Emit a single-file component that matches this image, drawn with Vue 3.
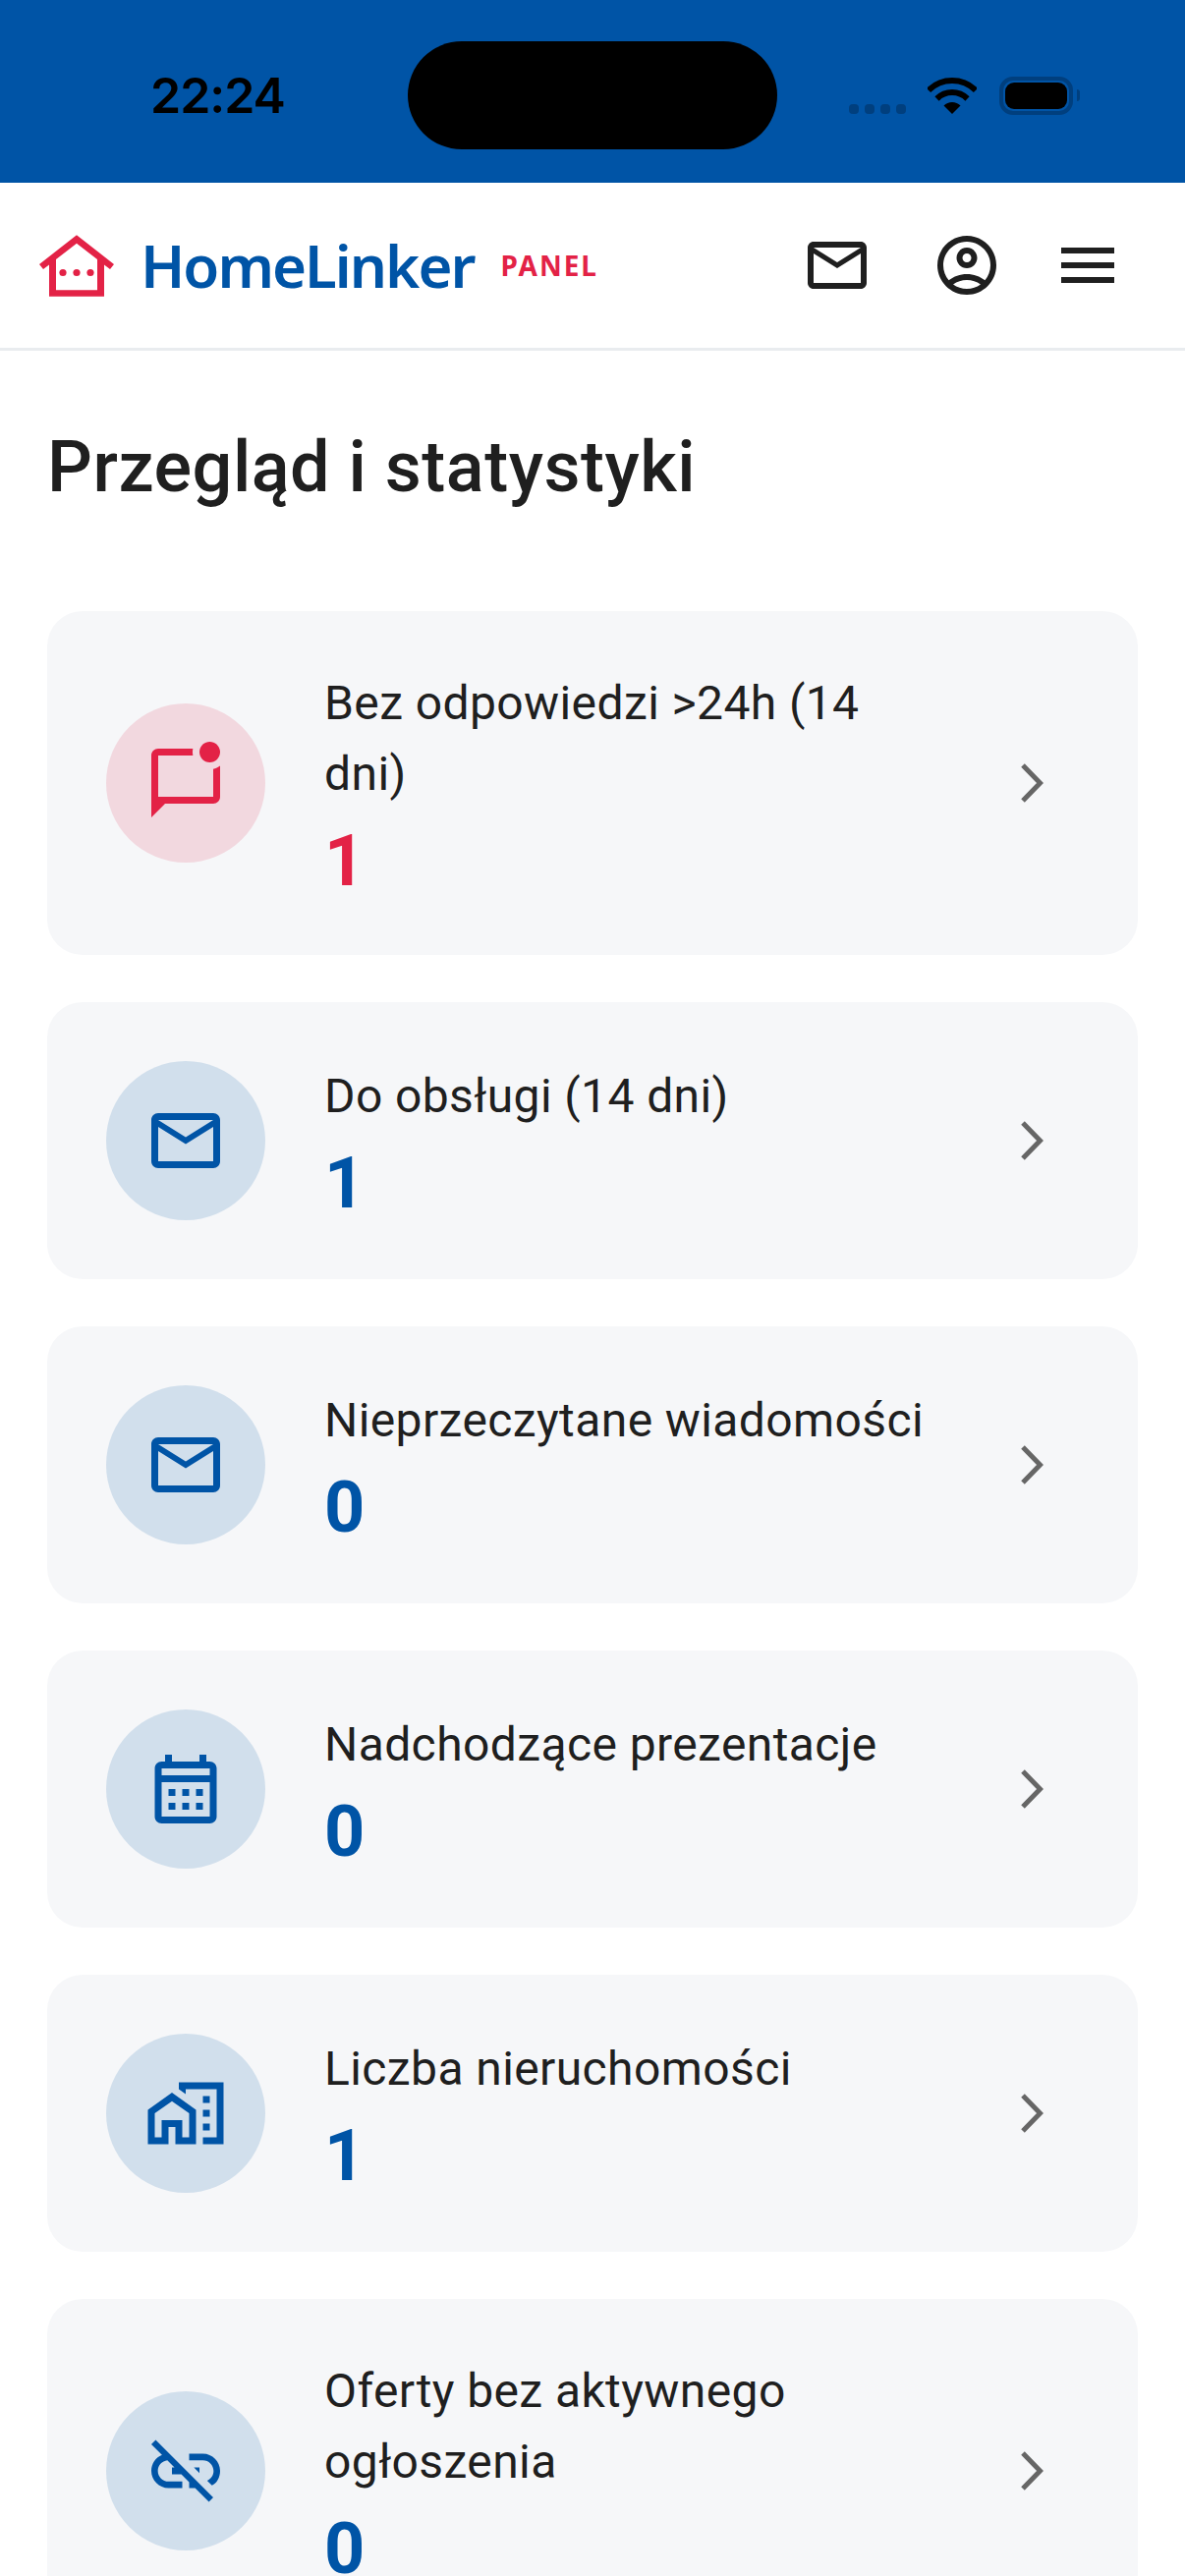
<script setup>
const paths = {
  chat: "M22 6.98V16c0 1.1-.9 2-2 2H6l-4 4V4c0-1.1.9-2 2-2h10.1c-.06.32-.1.66-.1 1s.04.68.1 1H4v12h16V7.9c.74-.15 1.42-.48 2-.92zM16 3c0 1.66 1.34 3 3 3s3-1.34 3-3-1.34-3-3-3-3 1.34-3 3z",
  mail: "M22 6c0-1.1-.9-2-2-2H4c-1.1 0-2 .9-2 2v12c0 1.1.9 2 2 2h16c1.1 0 2-.9 2-2V6zm-2 0l-8 5-8-5h16zm0 12H4V8l8 5 8-5v10z",
  calendar: "M19 4h-1V2h-2v2H8V2H6v2H5c-1.11 0-1.99.9-1.99 2L3 20c0 1.1.89 2 2 2h14c1.1 0 2-.9 2-2V6c0-1.1-.9-2-2-2zm0 16H5V10h14v10zm0-12H5V6h14v2zM9 14H7v-2h2v2zm4 0h-2v-2h2v2zm4 0h-2v-2h2v2zm-8 4H7v-2h2v2zm4 0h-2v-2h2v2zm4 0h-2v-2h2v2z",
  homes: "M1 11v10h6v-5h2v5h6V11L8 6l-7 5zm12 8h-2v-5H5v5H3v-7l5-3.5 5 3.5v7zM17 7h2v2h-2zM17 11h2v2h-2zM17 15h2v2h-2zM10 3v1.97l2 1.43V5h9v14h-4v2h6V3z",
  linkOff: "M14.39 11L16 12.61V11zM17 7h-4v1.9h4c1.71 0 3.1 1.39 3.1 3.1 0 1.27-.77 2.37-1.87 2.84l1.4 1.4C21.05 15.59 22 13.9 22 12c0-2.76-2.24-5-5-5zM2 4.27l3.11 3.11C3.29 8.12 2 9.91 2 12c0 2.76 2.24 5 5 5h4v-1.9H7c-1.71 0-3.1-1.39-3.1-3.1 0-1.59 1.21-2.9 2.76-3.07L8.73 11H8v2h2.73L13 15.27V17h1.73l4.01 4L20 19.74 3.27 3 2 4.27z",
  account: "M12 2C6.48 2 2 6.48 2 12s4.48 10 10 10 10-4.48 10-10S17.52 2 12 2zM7.35 18.5C8.66 17.56 10.26 17 12 17s3.34.56 4.65 1.5C15.34 19.44 13.74 20 12 20s-3.34-.56-4.65-1.5zm10.79-1.38C16.45 15.8 14.32 15 12 15s-4.45.8-6.14 2.12C4.7 15.73 4 13.95 4 12c0-4.42 3.58-8 8-8s8 3.58 8 8c0 1.95-.7 3.73-1.86 5.12zM12 6c-1.93 0-3.5 1.57-3.5 3.5S10.07 13 12 13s3.5-1.57 3.5-3.5S13.93 6 12 6zm0 5c-.83 0-1.5-.67-1.5-1.5S11.17 8 12 8s1.5.67 1.5 1.5S12.83 11 12 11z",
  menu: "M3 18h18v-2H3v2zm0-5h18v-2H3v2zm0-7v2h18V6H3z",
}

const stats = [
  { id: 1, label: "Bez odpowiedzi >24h (14 dni)", value: 1, icon: paths.chat, alert: true },
  { id: 2, label: "Do obsługi (14 dni)", value: 1, icon: paths.mail },
  { id: 3, label: "Nieprzeczytane wiadomości", value: 0, icon: paths.mail },
  { id: 4, label: "Nadchodzące prezentacje", value: 0, icon: paths.calendar },
  { id: 5, label: "Liczba nieruchomości", value: 1, icon: paths.homes },
  { id: 6, label: "Oferty bez aktywnego ogłoszenia", value: 0, icon: paths.linkOff },
]
</script>

<template>
  <main class="screen">
    <div class="status-bar">
      <span class="time">22:24</span>
      <div class="island"></div>
      <div class="signal">
        <i></i><i></i><i></i><i></i>
      </div>
      <svg class="wifi" width="50" height="37" viewBox="0 0 50 37">
        <path d="M1 13A34 34 0 0 1 49 13" fill="none" stroke="#000" stroke-width="6" />
        <path d="M9.5 21.5A22 22 0 0 1 40.5 21.5" fill="none" stroke="#000" stroke-width="6" />
        <path d="M25 37L16.5 28.5A12 12 0 0 1 33.5 28.5Z" fill="#000" />
      </svg>
      <div class="battery"><div class="battery-fill"></div></div>
      <div class="battery-nub"></div>
    </div>

    <header class="top-bar">
      <svg class="logo" width="76" height="63" viewBox="40 235.5 76 63">
        <path
          fill="#e32246"
          fill-rule="evenodd"
          d="M78 235.7L116 265.5L112 270.5L106 266V298.3H50V266L44 270.5L40 265.5ZM78 244.3L57 260.5V291.7H99V260.5Z"
        />
        <circle cx="64" cy="274" r="3.6" fill="#e32246" />
        <circle cx="78" cy="274" r="3.6" fill="#e32246" />
        <circle cx="92" cy="274" r="3.6" fill="#e32246" />
      </svg>
      <span class="brand">HomeLinker</span>
      <span class="panel">PANEL</span>
      <div class="top-actions">
        <svg class="top-icon" viewBox="0 0 24 24"><path :d="paths.mail" /></svg>
        <svg class="top-icon" viewBox="0 0 24 24"><path :d="paths.account" /></svg>
        <svg class="top-icon" viewBox="0 0 24 24"><path :d="paths.menu" /></svg>
      </div>
    </header>

    <section class="content">
      <h1>Przegląd i statystyki</h1>
      <div class="cards">
        <div v-for="stat in stats" :key="stat.id" class="card" :class="{ alert: stat.alert }">
          <div class="circle">
            <svg class="card-icon" viewBox="0 0 24 24"><path :d="stat.icon" /></svg>
          </div>
          <div class="info">
            <p class="label">{{ stat.label }}</p>
            <p class="value">{{ stat.value }}</p>
          </div>
          <svg class="chevron" width="24" height="40" viewBox="0 0 24 40">
            <path d="M3 2L20.5 20L3 38" fill="none" stroke="#666" stroke-width="5" />
          </svg>
        </div>
      </div>
    </section>
  </main>
</template>

<style scoped>
.screen {
  height: 2622px;
  overflow: hidden;
  background: #fff;
  font-family: Roboto, sans-serif;
  color: #1f1f1f;
}

.status-bar {
  height: 186px;
  box-sizing: border-box;
  padding: 42px 0 34px 153px;
  background: #0054a6;
  display: flex;
  align-items: center;
}

.time {
  width: 262px;
  font-family: Inter, sans-serif;
  font-size: 50px;
  font-weight: 600;
  letter-spacing: -1px;
  color: #000;
}

.island {
  width: 376px;
  height: 110px;
  border-radius: 55px;
  background: #000;
  margin-right: 73px;
}

.signal {
  display: flex;
  gap: 6px;
  align-self: flex-end;
  margin-bottom: 36px;
  width: 58px;
}

.signal i {
  width: 10px;
  height: 10px;
  border-radius: 4px;
  background: #003f7e;
}

.wifi {
  margin-left: 22px;
}

.battery {
  width: 75px;
  height: 39px;
  box-sizing: border-box;
  margin-left: 23px;
  border: 4px solid #003f7e;
  border-radius: 14px;
  padding: 2px;
}

.battery-fill {
  height: 100%;
  border-radius: 9px;
  background: #000;
}

.battery-nub {
  width: 3px;
  height: 12px;
  margin-left: 4px;
  border-radius: 0 4px 4px 0;
  background: #003f7e;
}

.top-bar {
  height: 171px;
  box-sizing: border-box;
  padding: 0 63px 0 40px;
  border-bottom: 3px solid #e9ecef;
  display: flex;
  align-items: center;
}

.brand {
  margin-left: 27px;
  font-family: "Noto Sans", sans-serif;
  font-size: 60px;
  font-weight: 600;
  letter-spacing: -2px;
  color: #0054a6;
}

.panel {
  margin-left: 27px;
  font-family: "Noto Sans", sans-serif;
  font-size: 28px;
  font-weight: 700;
  letter-spacing: 2px;
  color: #e32246;
}

.top-actions {
  margin-left: auto;
  display: flex;
  align-items: center;
}

.top-icon {
  width: 72px;
  height: 72px;
  fill: #1f1f1f;
}

.top-icon:nth-child(1) {
  margin-right: 60px;
}

.top-icon:nth-child(2) {
  margin-right: 51px;
}

.content {
  padding: 0 48px;
}

h1 {
  margin: 0;
  padding: 76px 0 103px;
  font-size: 72px;
  line-height: 86px;
  font-weight: 500;
  letter-spacing: 0.5px;
}

.cards {
  display: flex;
  flex-direction: column;
  gap: 48px;
}

.card {
  display: flex;
  align-items: center;
  padding: 60px 96px 60px 60px;
  border-radius: 36px;
  background: #f6f7f9;
}

.circle {
  flex: none;
  width: 162px;
  height: 162px;
  border-radius: 50%;
  background: #d1dfec;
  display: flex;
  align-items: center;
  justify-content: center;
}

.card-icon {
  width: 84px;
  height: 84px;
  fill: #0054a6;
}

.info {
  flex: 1;
  margin: 0 90px 0 60px;
}

.label {
  margin: -2px 0 0;
  font-size: 48px;
  line-height: 72px;
  letter-spacing: 0.4px;
}

.value {
  margin: 18px 0 0;
  font-size: 72px;
  line-height: 70px;
  font-weight: 700;
  color: #0054a6;
}

.chevron {
  flex: none;
}

.alert .circle {
  background: #f2d8df;
}

.alert .card-icon {
  fill: #e32246;
}

.alert .value {
  color: #e32246;
}
</style>
